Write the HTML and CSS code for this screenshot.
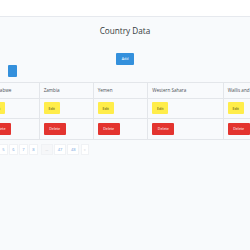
FILE: index.html
```html
<!DOCTYPE html>
<html>
<head>
<meta charset="utf-8">
<link rel="stylesheet" href="styles.css">
</head>
<body>
<header class="topbar"></header>
<main class="content">
  <h1 class="title">Country Data</h1>
  <div class="add-row"><button class="btn btn-blue btn-add">Add</button></div>
  <div class="side-btn"></div>
  <div class="table-wrap">
    <table class="grid">
      <colgroup>
        <col class="c1"><col class="c2"><col class="c3"><col class="c4"><col class="c5">
      </colgroup>
      <tr class="r-name">
        <td>Zimbabwe</td><td>Zambia</td><td>Yemen</td><td>Western Sahara</td><td>Wallis and Futuna</td>
      </tr>
      <tr class="r-btn">
        <td><button class="btn btn-yellow">Edit</button></td>
        <td><button class="btn btn-yellow">Edit</button></td>
        <td><button class="btn btn-yellow">Edit</button></td>
        <td><button class="btn btn-yellow">Edit</button></td>
        <td><button class="btn btn-yellow">Edit</button></td>
      </tr>
      <tr class="r-btn r-last">
        <td><button class="btn btn-red">Delete</button></td>
        <td><button class="btn btn-red">Delete</button></td>
        <td><button class="btn btn-red">Delete</button></td>
        <td><button class="btn btn-red">Delete</button></td>
        <td><button class="btn btn-red">Delete</button></td>
      </tr>
    </table>
  </div>
  <nav class="pager">
    <span class="pg pg-1">5</span>
    <span class="pg pg-1">6</span>
    <span class="pg pg-1">7</span>
    <span class="pg pg-1">8</span>
    <span class="pg pg-dots">…</span>
    <span class="pg pg-2">47</span>
    <span class="pg pg-2">48</span>
    <span class="pg pg-1 pg-next">»</span>
  </nav>
</main>
</body>
</html>
```

FILE: styles.css
```css
html, body {
  margin: 0;
  padding: 0;
  width: 250px;
  height: 250px;
  overflow: hidden;
  background: #f8fafc;
  font-family: "Open Sans", "Liberation Sans", sans-serif;
  color: #212529;
}

.topbar {
  height: 17px;
  background: #ffffff;
  border-bottom: 1px solid #e6e9ee;
  box-sizing: border-box;
}

.content {
  display: flex;
  flex-direction: column;
}

.title {
  margin: 8px 0 0 0;
  height: 12px;
  line-height: 12px;
  font-size: 8.2px;
  font-weight: 400;
  text-align: center;
  color: #343a40;
}

.add-row {
  display: flex;
  justify-content: center;
  margin-top: 16px;
}

.btn {
  border: none;
  margin: 0;
  padding: 0;
  font-family: inherit;
  font-size: 3.6px;
  border-radius: 1px;
  display: flex;
  align-items: center;
  justify-content: center;
}

.btn-blue {
  background: #3490dc;
  color: #ffffff;
}

.btn-add {
  width: 18px;
  height: 11.5px;
}

.side-btn {
  margin-left: 8px;
  width: 8.5px;
  height: 12.5px;
  background: #3490dc;
  border-radius: 1px;
}

.table-wrap {
  margin-top: 4.5px;
  margin-left: -16px;
  width: 340px;
}

.grid {
  border-collapse: collapse;
  table-layout: fixed;
  width: 314px;
}

.c1 { width: 54.7px; }
.c2 { width: 54px; }
.c3 { width: 54.6px; }
.c4 { width: 75.4px; }
.c5 { width: 75.3px; }

.grid td {
  border-top: 1px solid #e3e6ea;
  border-left: 1px solid #e3e6ea;
  padding: 0 0 0 4px;
  font-size: 4.6px;
  color: #4a4f55;
  white-space: nowrap;
  overflow: hidden;
  vertical-align: middle;
}

.r-name td {
  height: 15px;
}

.r-btn td {
  height: 19px;
}

.r-last td {
  height: 20px;
  border-bottom: 1px solid #e3e6ea;
}

.btn-yellow {
  background: #ffed4a;
  color: #3d3a15;
  width: 16px;
  height: 12px;
}

.btn-red {
  background: #e3342f;
  color: #ffffff;
  width: 22px;
  height: 12px;
}

.pager {
  display: flex;
  margin-top: 4.5px;
  margin-left: -1px;
  gap: 1.3px;
}

.pg {
  height: 11px;
  background: #ffffff;
  border: 1px solid #f0f2f5;
  box-sizing: border-box;
  color: #6fa3e0;
  font-size: 4px;
  display: flex;
  align-items: center;
  justify-content: center;
}

.pg-1 { width: 8.7px; }
.pg-2 { width: 12px; }
.pg-dots {
  width: 11.7px;
  margin-left: 2px;
  background: #f6f7f9;
  color: #b8bec6;
}
.pg-next { color: #c3c8cf; }
```
